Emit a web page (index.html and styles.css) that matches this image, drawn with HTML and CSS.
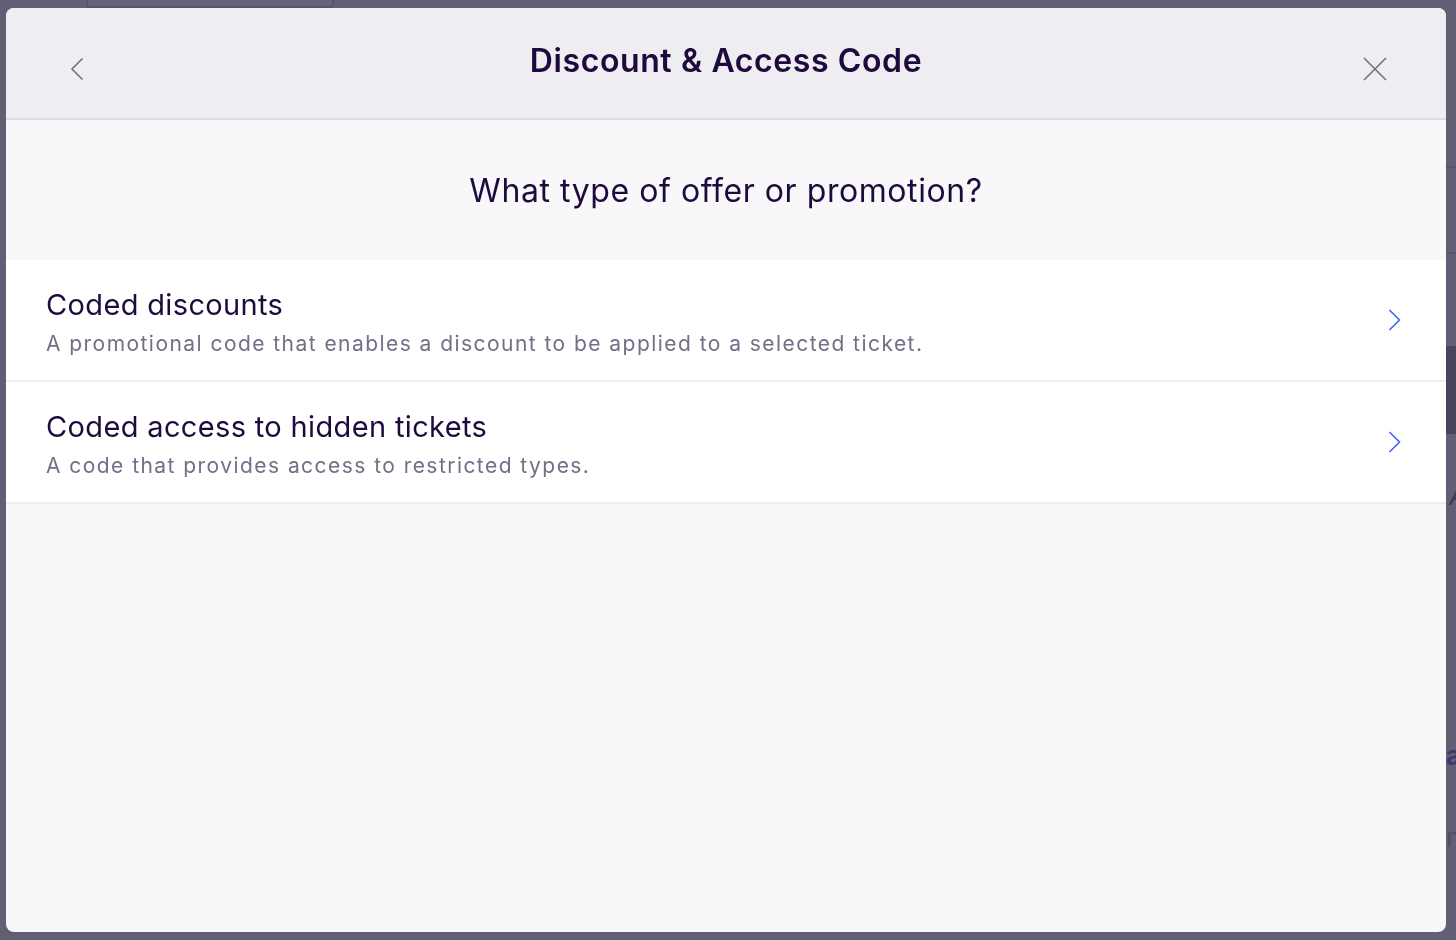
FILE: index.html
```html
<!DOCTYPE html>
<html lang="en">
<head>
<meta charset="utf-8">
<title>Discount &amp; Access Code</title>
<link rel="stylesheet" href="styles.css">
</head>
<body>
<div class="page">
  <div class="page-top">
    <div class="page-card"></div>
  </div>
  <div class="page-side">
    <div class="side-line l1"></div>
    <div class="side-line l2"></div>
    <div class="side-block"></div>
    <div class="side-text">A</div>
    <div class="side-link">a</div>
    <div class="side-text2">n</div>
  </div>
</div>

<div class="overlay">
  <div class="modal" role="dialog">
    <header class="modal-header">
      <button class="icon-btn back" aria-label="Back">
        <svg width="14" height="24" viewBox="0 0 14 24"><path d="M12.5 1.5 L2 12 L12.5 22.5" fill="none" stroke="#6f7287" stroke-width="1.6"/></svg>
      </button>
      <h1 class="modal-title">Discount &amp; Access Code</h1>
      <button class="icon-btn close" aria-label="Close">
        <svg width="24" height="24" viewBox="0 0 24 24"><path d="M1 1 L23 23 M23 1 L1 23" fill="none" stroke="#6f7287" stroke-width="1.6"/></svg>
      </button>
    </header>
    <div class="modal-body">
      <h2 class="question">What type of offer or promotion?</h2>
      <ul class="options">
        <li class="option">
          <div class="option-text">
            <div class="option-title">Coded discounts</div>
            <div class="option-desc">A promotional code that enables a discount to be applied to a selected ticket.</div>
          </div>
          <svg class="chev" width="13" height="22" viewBox="0 0 13 22"><path d="M1.5 1 L11.5 11 L1.5 21" fill="none" stroke="#3d64ff" stroke-width="1.6"/></svg>
        </li>
        <li class="option">
          <div class="option-text">
            <div class="option-title">Coded access to hidden tickets</div>
            <div class="option-desc">A code that provides access to restricted types.</div>
          </div>
          <svg class="chev" width="13" height="22" viewBox="0 0 13 22"><path d="M1.5 1 L11.5 11 L1.5 21" fill="none" stroke="#3d64ff" stroke-width="1.6"/></svg>
        </li>
      </ul>
    </div>
  </div>
</div>
</body>
</html>
```

FILE: styles.css
```css
* { box-sizing: border-box; }
html, body { margin: 0; padding: 0; }
body {
  width: 1456px;
  height: 940px;
  overflow: hidden;
  background: #625e73;
  font-family: Inter, "Noto Sans", "Liberation Sans", sans-serif;
  color: #1e0a3c;
}

/* dimmed page behind the dialog */
.page { position: relative; width: 1456px; height: 940px; }
.page-top { display: flex; padding-left: 86px; }
.page-card {
  width: 248px;
  height: 8px;
  border: 2px solid #57536a;
  border-top: none;
  border-radius: 0 0 4px 4px;
  background: #65617a;
}
.page-side {
  position: absolute;
  left: 1446px;
  top: 0;
  width: 10px;
  height: 940px;
  overflow: hidden;
}
.side-line { position: absolute; left: 0; width: 10px; height: 2px; background: #57536a; }
.side-line.l1 { top: 166px; }
.side-line.l2 { top: 252px; }
.side-block { position: absolute; left: 0; top: 346px; width: 10px; height: 88px; background: #48445c; }
.side-text { position: absolute; left: 3px; top: 480px; font-size: 26px; font-style: italic; color: #3f3b52; }
.side-link { position: absolute; left: 0; top: 740px; font-size: 26px; font-weight: 700; color: #3a3a72; }
.side-text2 { position: absolute; left: 0; top: 822px; font-size: 26px; color: #514d63; }

/* dialog */
.overlay {
  position: fixed;
  inset: 0;
  padding: 8px 10px 8px 6px;
}
.modal {
  width: 1440px;
  height: 924px;
  border-radius: 8px;
  background: #f8f8fa;
  overflow: hidden;
  display: flex;
  flex-direction: column;
}
.modal-header {
  height: 112px;
  flex: none;
  background: #eeedf2;
  border-bottom: 2px solid #dcdbe2;
  display: grid;
  grid-template-columns: 140px 1fr 140px;
  align-items: start;
}
.icon-btn {
  border: none;
  background: none;
  padding: 0;
  margin-top: 49px;
  display: flex;
  cursor: pointer;
}
.icon-btn.back { margin-left: 64px; }
.icon-btn.close { margin-left: 57px; }
.modal-title {
  margin: 0;
  padding-top: 34px;
  text-align: center;
  font-size: 32px;
  line-height: 38px;
  font-weight: 600;
  letter-spacing: 0.6px;
  color: #1e0a3c;
}
.modal-body { flex: 1; display: flex; flex-direction: column; }
.question {
  margin: 0;
  height: 140px;
  padding-top: 52px;
  text-align: center;
  font-size: 32px;
  line-height: 38px;
  font-weight: 400;
  letter-spacing: 0.57px;
  color: #1e0a3c;
}
.options { list-style: none; margin: 0; padding: 0; }
.option {
  height: 122px;
  background: #ffffff;
  border-bottom: 2px solid #eeedf2;
  display: flex;
  align-items: flex-start;
  justify-content: space-between;
  padding: 27px 45px 0 40px;
}
.option-text { display: flex; flex-direction: column; gap: 6px; }
.option-title {
  font-size: 29px;
  line-height: 36px;
  font-weight: 400;
  color: #1e0a3c;
  letter-spacing: 0.35px;
}
.option-desc {
  font-size: 21px;
  line-height: 30px;
  color: #6f7287;
  letter-spacing: 1.45px;
}
.chev { flex: none; align-self: center; margin-top: -27px; }
```
